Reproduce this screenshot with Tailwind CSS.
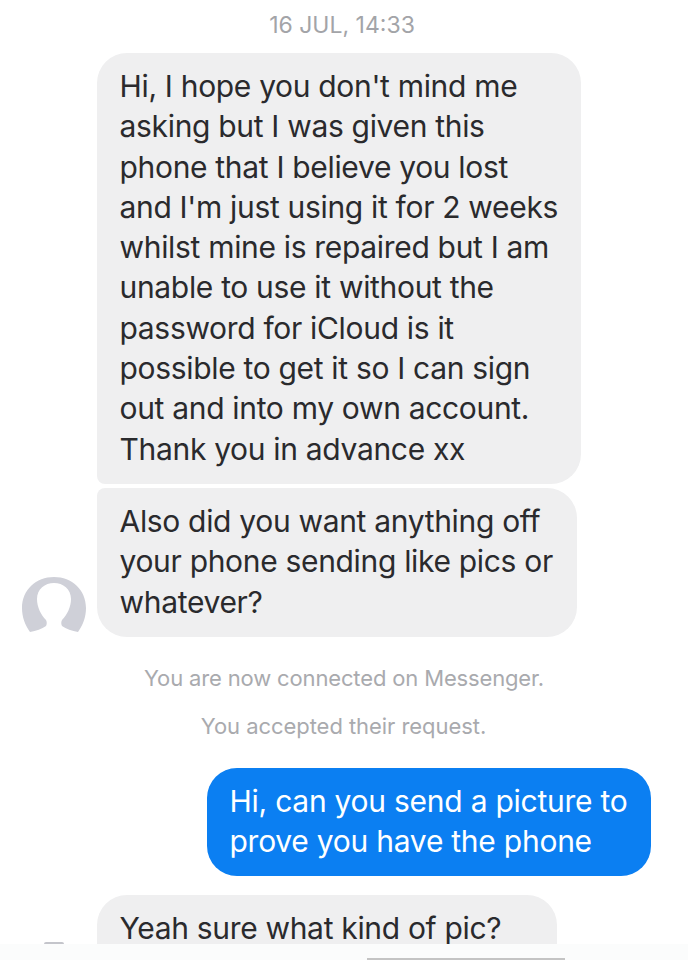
<!DOCTYPE html>
<html lang="en">
<head>
  <meta charset="UTF-8">
  <meta name="viewport" content="width=device-width, initial-scale=1.0">
  <title>Messages</title>
  <script src="https://cdn.jsdelivr.net/npm/@tailwindcss/browser@4"></script>
</head>
<body class="bg-white font-['Inter',sans-serif] antialiased">
  <div class="relative h-[960px] w-[688px] overflow-hidden">
    <!-- timestamp -->
    <div class="flex h-[53px] items-center justify-center pb-[3px] pr-[4px] text-[23px] text-[#a3a4a8]">16 JUL, 14:33</div>

    <!-- incoming bubbles -->
    <div class="ml-[97px] w-[484px] rounded-[30px] rounded-bl-[8px] bg-[#efeff0] pl-[22.5px] pt-[13px] pb-[15px] text-[30px] leading-[40.3px] tracking-[-0.32px] text-[#2a2a2d] whitespace-nowrap">
      Hi, I hope you don't mind me<br>
      asking but I was given this<br>
      phone that I believe you lost<br>
      and I'm just using it for 2 weeks<br>
      whilst mine is repaired but I am<br>
      unable to use it without the<br>
      password for iCloud is it<br>
      possible to get it so I can sign<br>
      out and into my own account.<br>
      Thank you in advance xx
    </div>
    <div class="mt-[4px] flex items-end">
      <div class="ml-[22px] mr-[11px] mb-[3px] h-[57px] w-[64px]">
        <svg viewBox="0 0 64 57" class="h-full w-full">
          <path fill="#cfd0d8" d="M8 55C3 48 0 40 0 31C0 13 14 0 32 0C50 0 64 13 64 31C64 40 61 48 56 55C50 54 44 52 40 49C39 47 39 45 40 43C45 38 49 30 49 22C49 12 41 6 32 6C23 6 15 12 15 22C15 30 19 38 24 43C25 45 25 47 24 49C20 52 14 54 8 55z"/>
        </svg>
      </div>
      <div class="w-[480px] rounded-[30px] rounded-tl-[8px] bg-[#efeff0] pl-[22.5px] pt-[13px] pb-[15px] text-[30px] leading-[40.3px] tracking-[-0.32px] text-[#2a2a2d] whitespace-nowrap">
        Also did you want anything off<br>
        your phone sending like pics or<br>
        whatever?
      </div>
    </div>

    <!-- system notices -->
    <div class="mt-[26px] text-center text-[22px] leading-[30px] tracking-[-0.15px] text-[#a9aaae]">You are now connected on Messenger.</div>
    <div class="mt-[18px] pr-[1px] text-center text-[22px] leading-[30px] tracking-[-0.05px] text-[#a9aaae]">You accepted their request.</div>

    <!-- outgoing -->
    <div class="mt-[27px] ml-[207px] w-[444px] rounded-[30px] bg-[#0b7ff2] pl-[22.5px] pt-[13px] pb-[15px] text-[30px] leading-[40.3px] tracking-[-0.25px] text-white whitespace-nowrap">
      Hi, can you send a picture to<br>
      prove you have the phone
    </div>

    <div class="mt-[19px] ml-[97px] w-[460px] rounded-t-[30px] bg-[#efeff0] pl-[22.5px] pt-[13px] pb-[15px] text-[30px] leading-[40.3px] tracking-[-0.32px] text-[#2a2a2d] whitespace-nowrap">Yeah sure what kind of pic?</div>

    <!-- bottom bar lying over the list -->
    <div class="absolute inset-x-0 bottom-0 h-[16px] bg-[#fbfcfc]">
      <div class="absolute left-[367px] bottom-0 h-[2px] w-[198px] bg-[#c4c4c4]"></div>
    </div>
    <div class="absolute left-[44px] bottom-[16px] h-[2px] w-[20px] rounded-t-full bg-[#c4c5cb]"></div>
  </div>
</body>
</html>
